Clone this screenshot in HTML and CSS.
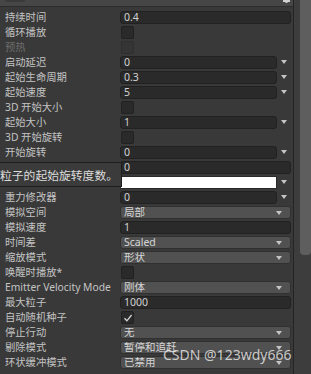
FILE: index.html
```html
<!DOCTYPE html>
<html lang="zh-CN">
<head>
  <meta charset="UTF-8">
  <title>Particle System</title>
  <link rel="stylesheet" href="styles.css">
</head>
<body>
  <div class="inspector">
    <div class="panel">
      <div class="strip">
        <span class="tab"></span>
        <svg class="plus" width="9" height="5" viewBox="0 0 9 5"><path d="M4.5 0v3M1 1h7" stroke="#d0d0d0" stroke-width="2"/></svg>
      </div>

      <div class="rows">
        <div class="row"><span class="label">持续时间</span><div class="field">0.4</div></div>
        <div class="row"><span class="label">循环播放</span><span class="check"></span></div>
        <div class="row off"><span class="label">预热</span><span class="check"></span></div>
        <div class="row"><span class="label">启动延迟</span><div class="field short">0</div><span class="arrow"></span></div>
        <div class="row"><span class="label">起始生命周期</span><div class="field short">0.3</div><span class="arrow"></span></div>
        <div class="row"><span class="label">起始速度</span><div class="field short">5</div><span class="arrow"></span></div>
        <div class="row"><span class="label">3D 开始大小</span><span class="check"></span></div>
        <div class="row"><span class="label">起始大小</span><div class="field short">1</div><span class="arrow"></span></div>
        <div class="row"><span class="label">3D 开始旋转</span><span class="check"></span></div>
        <div class="row"><span class="label">开始旋转</span><div class="field short">0</div><span class="arrow"></span></div>
        <div class="row"><span class="label"></span><div class="field">0</div></div>
        <div class="row"><span class="label"></span><div class="field short color"></div><span class="arrow"></span></div>
        <div class="row"><span class="label">重力修改器</span><div class="field short">0</div><span class="arrow"></span></div>
        <div class="row"><span class="label">模拟空间</span><div class="field drop">局部<span class="arrow"></span></div></div>
        <div class="row"><span class="label">模拟速度</span><div class="field">1</div></div>
        <div class="row"><span class="label">时间差</span><div class="field drop">Scaled<span class="arrow"></span></div></div>
        <div class="row"><span class="label">缩放模式</span><div class="field drop">形状<span class="arrow"></span></div></div>
        <div class="row"><span class="label">唤醒时播放*</span><span class="check"></span></div>
        <div class="row"><span class="label">Emitter Velocity Mode</span><div class="field drop">刚体<span class="arrow"></span></div></div>
        <div class="row"><span class="label">最大粒子</span><div class="field">1000</div></div>
        <div class="row"><span class="label">自动随机种子</span><span class="check on"><svg width="10" height="10" viewBox="0 0 10 10"><path d="M1.5 5.2l2.4 2.6L8.6 2" fill="none" stroke="#d4d4d4" stroke-width="1.3"/></svg></span></div>
        <div class="row"><span class="label">停止行动</span><div class="field drop">无<span class="arrow"></span></div></div>
        <div class="row"><span class="label">剔除模式</span><div class="field drop">暂停和追赶<span class="arrow"></span></div></div>
        <div class="row"><span class="label">环状缓冲模式</span><div class="field drop">已禁用<span class="arrow"></span></div></div>
      </div>
    </div>

    <div class="scrollbar"><div class="thumb"></div></div>

    <div class="tooltip">粒子的起始旋转度数。</div>
    <div class="watermark">CSDN @123wdy666</div>
  </div>
</body>
</html>
```

FILE: styles.css
```css
body {
  margin: 0;
  background: #393939;
  font-family: "Noto Sans", "Noto Sans CJK SC", sans-serif;
  color: #c6c6c6;
  overflow: hidden;
}

.inspector {
  position: relative;
  display: flex;
  width: 311px;
  height: 374px;
  overflow: hidden;
}

.panel {
  width: 293px;
  border-right: 1px solid #242424;
}

.strip {
  position: relative;
  height: 6px;
  background: #464646;
  border-bottom: 1px solid #2c2c2c;
}

.tab {
  position: absolute;
  left: 5px;
  top: 0;
  width: 20px;
  height: 2px;
  background: #3a3a3a;
  border-radius: 0 0 3px 3px;
}

.plus {
  position: absolute;
  left: 282px;
  top: 0;
}

.rows {
  padding-top: 3px;
}

.row {
  display: flex;
  align-items: center;
  height: 15px;
  padding-left: 5px;
}

.label {
  width: 115px;
  flex: none;
  font-size: 10.3px;
  line-height: 15px;
  white-space: nowrap;
  color: #c4c4c4;
}

.row.off .label {
  color: #6c6c6c;
}

.field {
  position: relative;
  box-sizing: border-box;
  width: 171px;
  height: 13px;
  padding-left: 3px;
  background: #2a2a2a;
  border: 1px solid #212121;
  border-radius: 3px;
  font-size: 10.5px;
  line-height: 11px;
  color: #d2d2d2;
}

.field.short {
  width: 157px;
}

.field.color {
  background: #ffffff;
  border-color: #2a2a2a;
  border-radius: 0;
}

.field.drop {
  background: #515151;
  border-color: #303030;
  color: #d6d6d6;
}

.arrow {
  width: 14px;
  height: 5px;
  flex: none;
  display: flex;
  justify-content: center;
}

.arrow::before {
  content: "";
  width: 0;
  height: 0;
  border-left: 3.5px solid transparent;
  border-right: 3.5px solid transparent;
  border-top: 4px solid #c4c4c4;
}

.field.drop .arrow {
  position: absolute;
  right: 4px;
  top: 4px;
}

.check {
  box-sizing: border-box;
  width: 13px;
  height: 13px;
  margin-left: 1px;
  display: flex;
  align-items: center;
  justify-content: center;
  background: #2a2a2a;
  border: 1px solid #212121;
  border-radius: 2px;
}

.row.off .check {
  background: #353535;
  border-color: #2e2e2e;
}

.scrollbar {
  flex: 1;
  display: flex;
  justify-content: flex-end;
  background: #3d3d3d;
}

.thumb {
  width: 11px;
  height: 255px;
  background: #5e5e5e;
  border-radius: 0 0 4px 4px;
}

.tooltip {
  position: absolute;
  left: -1px;
  top: 162px;
  width: 121px;
  height: 23px;
  background: #3b3b3b;
  border: 1px solid #1e1e1e;
  font-family: "Noto Sans CJK SC", sans-serif;
  font-size: 11.8px;
  line-height: 23px;
  color: #dcdcdc;
  white-space: nowrap;
}

.watermark {
  position: absolute;
  left: 163px;
  top: 346px;
  font-size: 14px;
  line-height: 18px;
  color: rgba(255, 255, 255, 0.72);
  white-space: nowrap;
}
```
